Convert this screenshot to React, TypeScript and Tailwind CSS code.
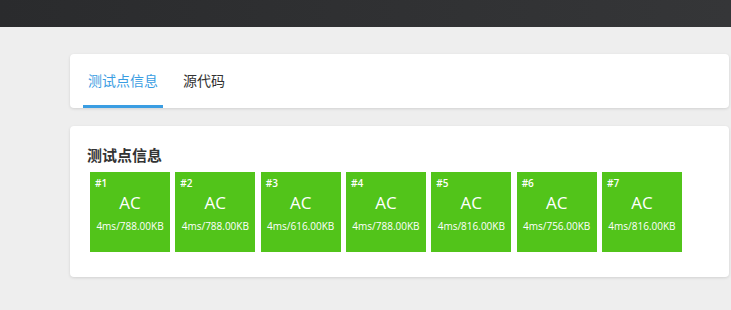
const cases = [
  { id: 1, time: "4ms", mem: "788.00KB" },
  { id: 2, time: "4ms", mem: "788.00KB" },
  { id: 3, time: "4ms", mem: "616.00KB" },
  { id: 4, time: "4ms", mem: "788.00KB" },
  { id: 5, time: "4ms", mem: "816.00KB" },
  { id: 6, time: "4ms", mem: "756.00KB" },
  { id: 7, time: "4ms", mem: "816.00KB" },
];

const App = () => {
  return (
    <div
      className="min-h-[310px] bg-[#eeeeee]"
      style={{ fontFamily: '"Open Sans", "Noto Sans CJK SC", sans-serif' }}
    >
      {/* top bar */}
      <div className="h-[27px] bg-gradient-to-r from-[#2a2b2d] to-[#353638]" />

      <div className="pl-[70px] pr-[2px] pt-[27px]">
        {/* tabs card */}
        <div className="h-[54px] rounded bg-white shadow-[0_1px_3px_rgba(0,0,0,0.12)] px-[13px] flex items-stretch">
          <button className="w-[80px] whitespace-nowrap flex items-center justify-center text-[14px] text-[#3a9de2] border-b-[3px] border-[#3a9de2] pt-[2px]">
            测试点信息
          </button>
          <button className="ml-[20px] whitespace-nowrap flex items-center text-[14px] text-[#333] pb-[1px]">
            源代码
          </button>
        </div>

        {/* cases card */}
        <div className="mt-[18px] h-[151px] rounded bg-white shadow-[0_1px_3px_rgba(0,0,0,0.12)] pl-[17px] pr-4 pt-[18px]">
          <h3 className="text-[15px] font-bold text-[#333] leading-[22px]">测试点信息</h3>
          <div className="mt-[6px] ml-[3px] flex gap-[5.33px]">
            {cases.map((c) => (
              <div
                key={c.id}
                className="w-[80px] h-[80px] bg-[#52c41a] text-white flex flex-col px-[5px] pt-[4px]"
              >
                <span className="text-[10px] leading-[14px] font-semibold">#{c.id}</span>
                <span className="text-center text-[17px] leading-[22px] mt-[2px]">AC</span>
                <span className="text-center text-[10px] leading-[14px] mt-[5px] whitespace-nowrap -mx-[5px]">
                  {c.time}/{c.mem}
                </span>
              </div>
            ))}
          </div>
        </div>
      </div>
    </div>
  );
};

export default App;
